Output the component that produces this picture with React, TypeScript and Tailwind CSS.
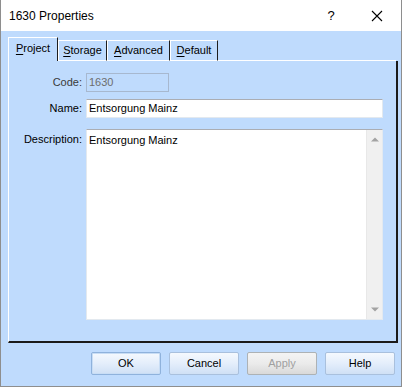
import React from 'react';

const tabs = [
  { key: 'P', rest: 'roject', w: 'w-[50px]' },
  { key: 'S', rest: 'torage', w: 'w-[49px]' },
  { key: 'A', rest: 'dvanced', w: 'w-[63px]' },
  { key: 'D', rest: 'efault', w: 'w-[48px]' },
];

function DlgButton({ label, focused, disabled }: { label: string; focused?: boolean; disabled?: boolean }) {
  if (disabled) {
    return (
      <div className="w-[70px] h-[23px] rounded-[2px] border border-[#adb2b5] bg-gradient-to-b from-[#f4f4f4] via-[#ebebeb] to-[#d9d9d9] flex items-center justify-center text-[11px] text-[#a0a0a0]">
        {label}
      </div>
    );
  }
  return (
    <div
      className={`w-[70px] h-[23px] rounded-[2px] border ${
        focused ? 'border-[#8fb2dc] shadow-[inset_0_0_0_1px_#c8ddf5]' : 'border-[#a9c0dd]'
      } bg-gradient-to-b from-[#f5f9fe] via-[#e4eefb] to-[#cfe0f5] flex items-center justify-center text-[11px] text-black`}
    >
      {label}
    </div>
  );
}

export default function App() {
  return (
    <div className="w-[402px] h-[387px] flex flex-col border-x border-b border-[#8e8e8e] bg-[#bfdbfd] font-['Liberation_Sans',Arial,sans-serif] text-[11px] text-black overflow-hidden">
      {/* Title bar */}
      <div className="h-[31px] shrink-0 bg-white flex items-center pl-[8px]">
        <span className="text-[12px] text-black">1630 Properties</span>
        <span className="ml-auto text-[13px] w-[10px] text-center mr-[35px]">?</span>
        <svg width="12" height="12" viewBox="0 0 12 12" className="mr-[18px]">
          <path d="M1 1 L11 11 M11 1 L1 11" stroke="#000" strokeWidth="1.1" />
        </svg>
      </div>

      {/* Body */}
      <div className="flex-1 flex flex-col pl-[7px] pr-[5px] pt-[6px]">
        {/* Tab strip */}
        <div className="flex items-end h-[24px]">
          {tabs.map((t, i) => (
            <div
              key={t.key}
              className={`${t.w} ${
                i === 0 ? 'h-[24px] pb-[3px]' : 'h-[21px] border-b border-b-white'
              } flex items-center justify-center border-l border-t border-l-white border-t-white border-r border-r-[#1e1e1e]`}
            >
              <span>
                <span className="underline underline-offset-[2px]">{t.key}</span>
                {t.rest}
              </span>
            </div>
          ))}
          <div className="flex-1 h-[1px] bg-white" />
        </div>

        {/* Panel */}
        <div className="w-[390px] h-[282px] border-l border-l-white border-r-2 border-r-[#1a1a1a] border-b-2 border-b-[#1a1a1a] pt-[12px] pr-[13px]">
          <div className="grid grid-cols-[73px_1fr] gap-x-[4px]">
            <div className="h-[19px] flex items-center justify-end text-[#3a3a3a]">Code:</div>
            <div className="w-[83px] h-[19px] border border-[#a7b8cf] flex items-center pl-[2px] text-[#6d6d6d]">1630</div>

            <div className="h-[19px] mt-[7px] flex items-center justify-end">Name:</div>
            <div className="h-[19px] mt-[7px] bg-white border border-[#e3e9ef] border-t-[#abadb3] flex items-center pl-[2px]">
              Entsorgung Mainz
            </div>

            <div className="mt-[11px] pt-[2px] flex justify-end">Description:</div>
            <div className="h-[191px] mt-[11px] bg-white border border-[#e3e9ef] border-t-[#abadb3] flex">
              <div className="flex-1 pl-[2px] pt-[2px]">Entsorgung Mainz</div>
              <div className="w-[16px] bg-[#f0f0f0] border-l border-[#e8e8e8] flex flex-col items-center justify-between py-[7px]">
                <svg width="8" height="5" viewBox="0 0 8 5">
                  <path d="M0 4.5 L4 0.5 L8 4.5 Z" fill="#a3a3a3" />
                </svg>
                <svg width="8" height="5" viewBox="0 0 8 5">
                  <path d="M0 0.5 L4 4.5 L8 0.5 Z" fill="#a3a3a3" />
                </svg>
              </div>
            </div>
          </div>
        </div>

        {/* Buttons */}
        <div className="flex justify-end gap-[8px] mt-[9px] pr-[1px]">
          <DlgButton label="OK" focused />
          <DlgButton label="Cancel" />
          <DlgButton label="Apply" disabled />
          <DlgButton label="Help" />
        </div>
      </div>
    </div>
  );
}
